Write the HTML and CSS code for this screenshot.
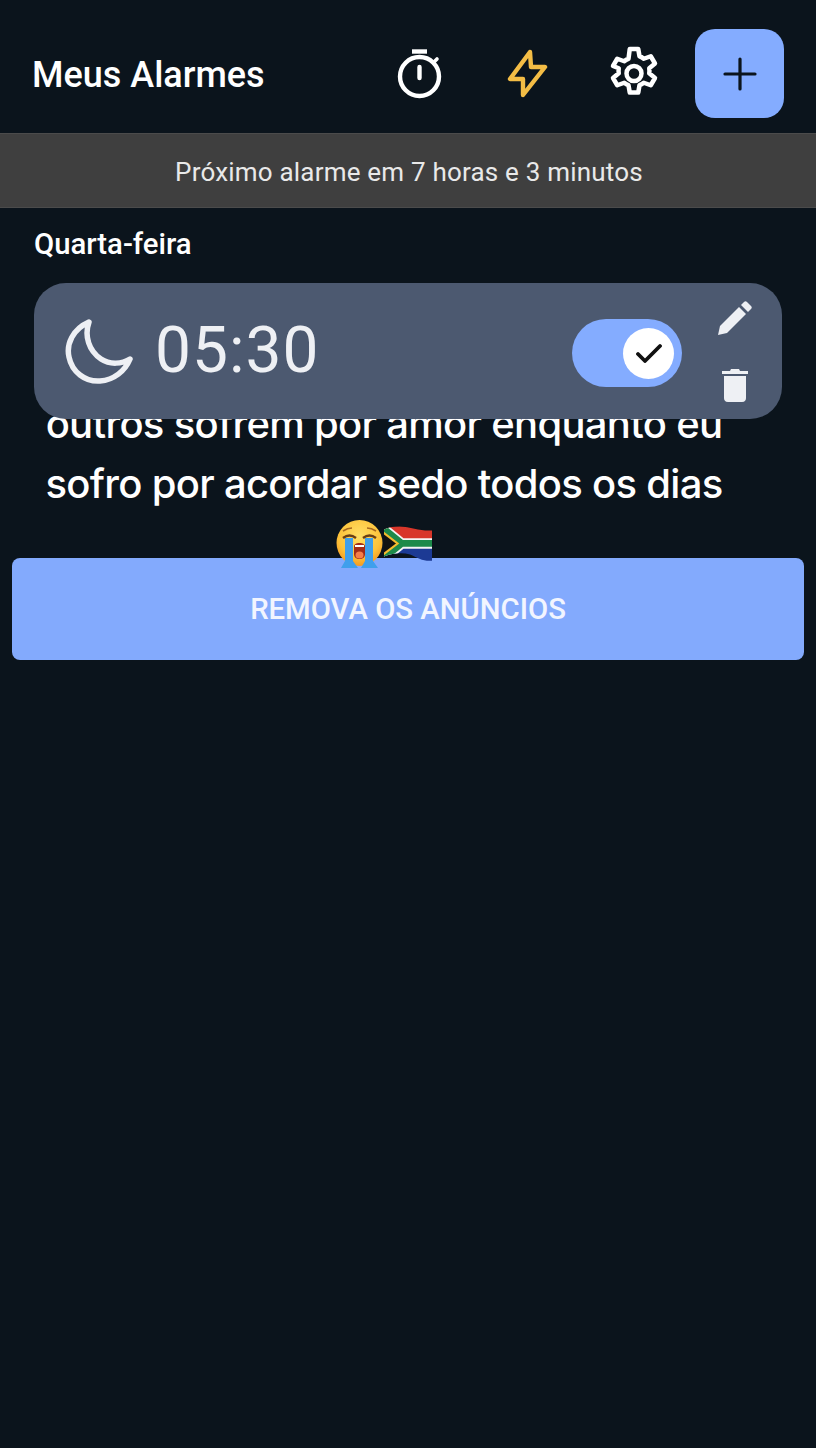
FILE: index.html
```html
<!DOCTYPE html>
<html lang="pt">
<head>
  <meta charset="UTF-8">
  <meta name="viewport" content="width=device-width, initial-scale=1.0">
  <title>Meus Alarmes</title>
  <link rel="stylesheet" href="styles.css">
</head>
<body>
  <header class="topbar">
    <h1 class="title">Meus Alarmes</h1>
    <div class="actions">
      <svg class="icon icon-timer" viewBox="0 0 46 52" fill="none" stroke="#fff" stroke-width="4.400" stroke-linecap="round">
        <circle cx="23.500" cy="28.500" r="19.500"/>
        <path d="M16 3.500h15" stroke-linecap="butt"/>
        <path d="M23.500 19v11"/>
        <path d="M38 14l3-3" stroke-width="3.600"/>
      </svg>
      <svg class="icon icon-bolt" viewBox="0 0 41 49" fill="none" stroke="#f4bd45" stroke-width="4.400" stroke-linejoin="round">
        <path d="M23 3L3 30h13v16l22-28H24z"/>
      </svg>
      <svg class="icon icon-gear" viewBox="0 0 24 24" fill="none" stroke="#fff" stroke-width="1.800" stroke-linejoin="round">
        <path d="M10.300 2h3.400l.5 2.900c.6.2 1.200.6 1.700 1l2.800-1 1.700 2.900-2.300 1.900c.1.7.1 1.300 0 2l2.300 1.900-1.700 2.900-2.800-1c-.5.4-1.100.8-1.700 1l-.5 2.900h-3.400l-.5-2.900c-.6-.2-1.200-.6-1.700-1l-2.800 1-1.700-2.900 2.300-1.900c-.1-.7-.1-1.300 0-2L3.600 8.800l1.700-2.900 2.800 1c.5-.4 1.100-.8 1.700-1z"/>
        <circle cx="12" cy="11.800" r="3"/>
      </svg>
      <button class="add-btn">
        <svg class="add-icon" viewBox="0 0 34 34" fill="none" stroke="#0b141c" stroke-width="3.200" stroke-linecap="round">
          <path d="M17 2v30M2 17h30"/>
        </svg>
      </button>
    </div>
  </header>

  <div class="next-alarm">Próximo alarme em 7 horas e 3 minutos</div>

  <main class="content">
    <h2 class="day">Quarta-feira</h2>
    <section class="alarm-card">
      <svg class="moon" viewBox="0 0 68 66" fill="none" stroke="#eef0f4" stroke-width="5.500" stroke-linejoin="round">
        <path d="M24 3C8 10 1 25 4 38c3 15 16 25 31 24 14-1 25-10 30-22-8 5-20 6-29 0C24 32 19 17 24 3z"/>
      </svg>
      <span class="time">05:30</span>
      <div class="toggle">
        <span class="knob">
          <svg class="check" viewBox="0 0 26 20" fill="none" stroke="#111" stroke-width="3.800" stroke-linecap="round" stroke-linejoin="round">
            <path d="M2 11l7 7L24 3"/>
          </svg>
        </span>
      </div>
      <div class="card-actions">
        <svg class="pencil" viewBox="0 0 34 34" fill="#eef0f4">
          <path d="M0 34l2-9L21 6l7 7L9 32z"/>
          <path d="M23 4l3-3c1-1 2-1 3 0l4 4c1 1 1 2 0 3l-3 3z"/>
        </svg>
        <svg class="trash" viewBox="0 0 26 34" fill="#eef0f4">
          <path d="M0 3h8l1-2h8l1 2h8v3H0z"/>
          <path d="M2 8h22v22c0 2-1 4-4 4H6c-3 0-4-2-4-4z"/>
        </svg>
      </div>
    </section>
  </main>

  <section class="ad">
    <p class="ad-text">outros sofrem por amor enquanto eu sofro por acordar sedo todos os dias
      <span class="emojis">
        <svg class="emoji" viewBox="0 0 48 49">
          <defs>
            <radialGradient id="faceFill" cx="50%" cy="35%" r="65%">
              <stop offset="0%" stop-color="#ffe067"/>
              <stop offset="70%" stop-color="#fdc23a"/>
              <stop offset="100%" stop-color="#f59a20"/>
            </radialGradient>
          </defs>
          <circle cx="23.500" cy="23" r="23" fill="url(#faceFill)"/>
          <path d="M7 11c3-2 6-3 9-3M40 11c-3-2-6-3-9-3" fill="none" stroke="#a8691f" stroke-width="1.600"/>
          <path d="M7 18c4-3 9-3 13 0M27 18c4-3 9-3 13 0" fill="none" stroke="#6b3f14" stroke-width="2.400"/>
          <path d="M18 27c0-3 2-4 5.500-4s5.500 1 5.500 4v7c0 3-2 5-5.500 5S18 37 18 34z" fill="#a32c18"/>
          <ellipse cx="23.500" cy="35" rx="4" ry="3.500" fill="#f57f4a"/>
          <path d="M19 25h9v2h-9z" fill="#fff"/>
          <path d="M9 18h8v23l5 7H5l4-7z" fill="#3f9fec"/>
          <path d="M29 18h8v23l5 7H25l4-7z" fill="#3f9fec"/>
        </svg>
        <svg class="flag" viewBox="0 0 46 34">
          <defs>
            <clipPath id="flagShape">
              <path d="M0 3C5 1 10 0 15 0c11 1 21 5 31 4v29c-8 1-14-3-21-6-8-2-17-1-25 2z"/>
            </clipPath>
          </defs>
          <g clip-path="url(#flagShape)">
            <rect x="0" y="0" width="46" height="17" fill="#d8362a"/>
            <rect x="0" y="17" width="46" height="17" fill="#1c3a94"/>
            <path d="M-2 1l19 15.500h31M-2 32l19-15.500" fill="none" stroke="#f4f4f4" stroke-width="10"/>
            <path d="M-2 1l19 15.500h31M-2 32l19-15.500" fill="none" stroke="#1d8a4a" stroke-width="6.500"/>
            <path d="M-2 5l15 11.500L-2 28z" fill="#121212" stroke="#f4bb2e" stroke-width="2"/>
          </g>
        </svg>
      </span>
    </p>
    <button class="remove-ads">REMOVA OS ANÚNCIOS</button>
  </section>
</body>
</html>
```

FILE: styles.css
```css
* {
  box-sizing: border-box;
}

body {
  margin: 0;
  height: 1448px;
  overflow: hidden;
  background-color: #0b141c;
  font-family: Roboto, "Noto Sans", sans-serif;
  color: #fff;
}

.topbar {
  height: 133px;
  padding: 14px 32px 0 32px;
  display: flex;
  align-items: center;
  justify-content: space-between;
}

.title {
  margin: 3px 0 0;
  font-size: 36px;
  font-weight: 500;
}

.actions {
  display: flex;
  align-items: center;
}

.icon {
  display: block;
}

.icon-timer {
  width: 46px;
  height: 52px;
  margin-right: 65px;
}

.icon-bolt {
  width: 41px;
  height: 49px;
  margin-right: 56px;
}

.icon-gear {
  width: 60px;
  height: 60px;
  margin-right: 31px;
}

.add-btn {
  width: 89px;
  height: 89px;
  border: none;
  border-radius: 20px;
  background-color: #84acff;
  display: flex;
  align-items: center;
  justify-content: center;
  padding: 0;
}

.add-icon {
  width: 34px;
  height: 34px;
}

.next-alarm {
  height: 75px;
  padding: 2px 0 0 2px;
  background-color: #3f3f3f;
  border-top: 1px solid #4b4b4b;
  border-bottom: 1px solid #4b4b4b;
  color: #e9e9e9;
  font-size: 26px;
  display: flex;
  align-items: center;
  justify-content: center;
  letter-spacing: 0.2px;
}

.content {
  padding: 0 34px;
}

.day {
  margin: 0;
  height: 75px;
  padding-top: 19px;
  font-size: 29.300px;
  line-height: 34px;
  font-weight: 500;
}

.alarm-card {
  position: relative;
  z-index: 1;
  height: 136px;
  background-color: #4c5970;
  border-radius: 32px;
  display: flex;
  align-items: center;
  padding: 0 30px 0 31px;
}

.moon {
  width: 68px;
  height: 66px;
  margin-top: 2px;
}

.time {
  font-size: 64px;
  font-weight: 400;
  color: #eef0f4;
  margin: -2px 0 0 22px;
  letter-spacing: 1px;
}

.toggle {
  margin: 4px 0 0 auto;
  width: 110px;
  height: 68px;
  border-radius: 34px;
  background-color: #84acff;
  display: flex;
  align-items: center;
  justify-content: flex-end;
  padding-right: 8px;
}

.knob {
  width: 51px;
  height: 51px;
  border-radius: 50%;
  background-color: #fff;
  display: flex;
  align-items: center;
  justify-content: center;
}

.check {
  width: 26px;
  height: 20px;
}

.card-actions {
  margin-left: 36px;
  display: flex;
  flex-direction: column;
  align-items: center;
  gap: 33px;
}

.pencil {
  width: 34px;
  height: 34px;
}

.trash {
  width: 26px;
  height: 34px;
}

.ad {
  padding: 0 12px;
  margin-top: -25px;
}

.ad-text {
  margin: 0;
  height: 164px;
  padding: 0 78px 0 30px;
  font-family: Inter, Roboto, sans-serif;
  font-size: 40px;
  font-weight: 500;
  letter-spacing: -0.7px;
  line-height: 60px;
  text-align: center;
}

.emojis {
  display: inline-flex;
  align-items: center;
  vertical-align: top;
  height: 60px;
}

.emoji {
  width: 48px;
  height: 49px;
}

.flag {
  width: 48px;
  height: 36px;
}

.remove-ads {
  display: block;
  width: 100%;
  height: 102px;
  border: none;
  border-radius: 8px;
  background-color: #83aafd;
  color: #f2f5ff;
  font-family: Roboto, sans-serif;
  font-size: 29.300px;
  font-weight: 500;
}
```
